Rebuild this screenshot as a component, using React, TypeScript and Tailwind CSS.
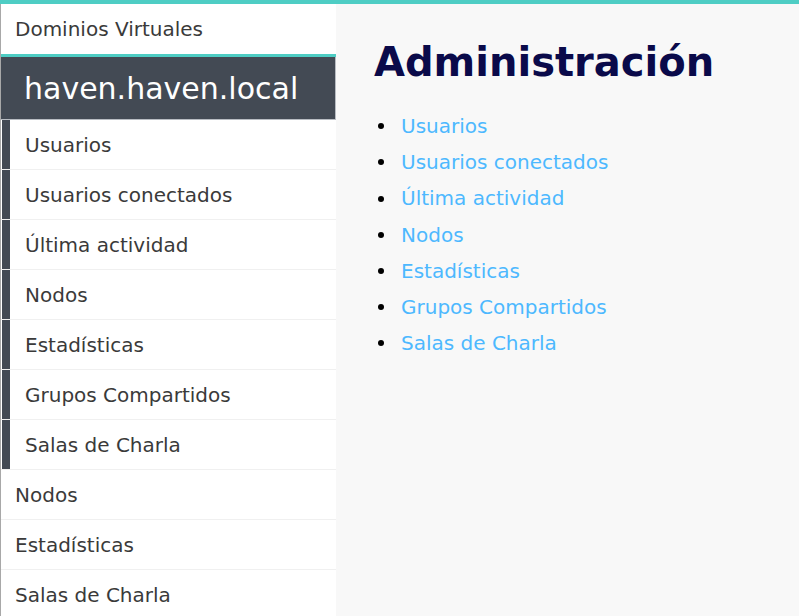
import React from "react";

const sub = [
  "Usuarios",
  "Usuarios conectados",
  "Última actividad",
  "Nodos",
  "Estadísticas",
  "Grupos Compartidos",
  "Salas de Charla",
];
const top = ["Nodos", "Estadísticas", "Salas de Charla"];

export default function App() {
  return (
    <div
      className="w-[799px] h-[616px] overflow-hidden flex flex-col bg-[#f8f8f8]"
      style={{ fontFamily: '"DejaVu Sans", sans-serif' }}
    >
      <div className="h-[4px] bg-[#4ecdc4] shrink-0" />
      <div className="flex flex-1 min-h-0">
        <aside className="w-[336px] shrink-0 bg-white border-l border-[#a8a8a8] text-[20px] text-[#3a3a3a]">
          <div className="h-[50px] flex items-center pl-[14px]">Dominios Virtuales</div>
          <div className="h-[3px] bg-[#4ecdc4]" />
          <div className="h-[63px] bg-[#434a54] text-white text-[30px] flex items-center pl-[23px] border-r border-b border-[#b8bcc2]">
            haven.haven.local
          </div>
          {sub.map((s) => (
            <div key={s} className="h-[50px] flex border-b border-[#f0f0f0]">
              <div className="w-[8px] bg-[#434a54] ml-px" />
              <div className="flex items-center pl-[15px]">{s}</div>
            </div>
          ))}
          {top.map((s) => (
            <div key={s + "t"} className="h-[50px] flex items-center pl-[14px] border-b border-[#f0f0f0]">
              {s}
            </div>
          ))}
        </aside>
        <main className="flex-1 pl-[38px] pt-[35px]">
          <h1 className="text-[40px] font-bold text-[#0a0a4a] leading-[46px]">Administración</h1>
          <ul className="mt-[23px] text-[20px] leading-[36.2px] text-[#4db8ff]">
            {sub.map((s) => (
              <li key={s} className="flex items-center">
                <span className="w-[6px] h-[6px] rounded-full bg-black ml-[4px] mr-[17px] shrink-0" />
                <span>{s}</span>
              </li>
            ))}
          </ul>
        </main>
      </div>
    </div>
  );
}
